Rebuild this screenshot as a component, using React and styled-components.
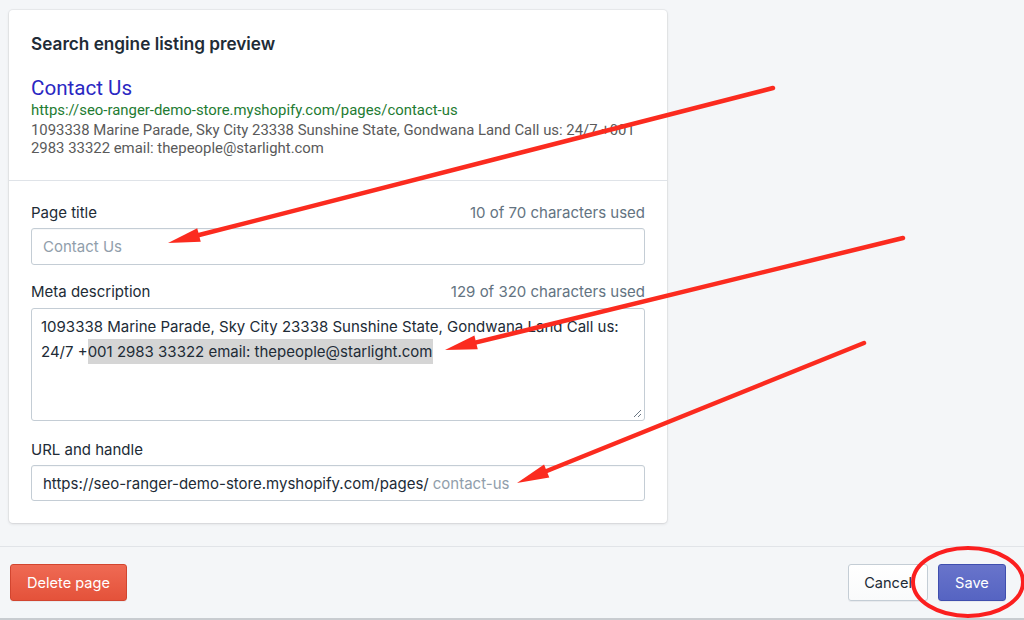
import React from 'react'
import styled, { createGlobalStyle } from 'styled-components'

const GlobalStyle = createGlobalStyle`
	html, body {
		margin: 0;
		padding: 0;
		background: #f4f6f8;
	}
	body {
		font-family: Inter, 'Noto Sans', 'Liberation Sans', sans-serif;
		color: #212b36;
	}
`

const Page = styled.div`
	position: relative;
	width: 1024px;
	height: 620px;
	overflow: hidden;
	background: #f4f6f8;
	display: flex;
	flex-direction: column;
`

const Main = styled.div`
	padding: 10px 0 0 9px;
	height: 546px;
	box-sizing: border-box;
`

const Card = styled.div`
	width: 658px;
	background: #fff;
	border-radius: 4px;
	box-shadow: 0 0 0 1px rgba(63, 63, 68, 0.05), 0 1px 3px 0 rgba(63, 63, 68, 0.15);
`

const Section = styled.div`
	padding: ${(p) => p.$pad};
	border-top: ${(p) => (p.$divided ? '1px solid #dfe3e8' : 'none')};
`

const Heading = styled.h2`
	margin: 0 0 22px;
	font-size: 17.2px;
	line-height: 20px;
	font-weight: 600;
	color: #212b36;
`

const PreviewTitle = styled.div`
	font-size: 20.6px;
	line-height: 24px;
	color: #2a27c2;
	font-family: Roboto, 'Liberation Sans', sans-serif;
`

const PreviewUrl = styled.div`
	font-size: 14.9px;
	line-height: 20px;
	color: #1e7b32;
	font-family: Roboto, 'Liberation Sans', sans-serif;
`

const PreviewText = styled.div`
	margin-top: 1px;
	font-size: 14.9px;
	line-height: 18px;
	color: #5a5a5a;
	font-family: Roboto, 'Liberation Sans', sans-serif;
`

const Field = styled.div`
	margin-top: ${(p) => p.$top || 0}px;
`

const LabelRow = styled.div`
	display: flex;
	justify-content: space-between;
	align-items: center;
	font-size: 15px;
	line-height: 20px;
	margin-bottom: ${(p) => p.$gap || 5}px;
`

const Label = styled.span`
	color: #212b36;
`

const Counter = styled.span`
	color: #637381;
`

const Input = styled.div`
	box-sizing: border-box;
	height: ${(p) => p.$h || 37}px;
	border: 1px solid #c4cdd5;
	border-radius: 3px;
	box-shadow: inset 0 1px 0 0 rgba(99, 115, 129, 0.05);
	padding: 0 11px;
	display: flex;
	align-items: center;
	font-size: 15px;
	color: #212b36;
	background: #fff;
`

const Placeholder = styled.span`
	color: #919eab;
	margin-left: ${(p) => p.$ml || 0}px;
`

const TextArea = styled.div`
	position: relative;
	box-sizing: border-box;
	height: 113px;
	border: 1px solid #c4cdd5;
	border-radius: 3px;
	padding: 5px 9px;
	font-size: 15px;
	line-height: 25px;
	color: #212b36;
`

const Highlight = styled.span`
	background: #d5d5d5;
	padding: 3px 0;
`

const Grip = styled.svg`
	position: absolute;
	right: 2px;
	bottom: 2px;
`

const Footer = styled.div`
	flex: 1;
	border-top: 1px solid #e1e4e8;
	border-bottom: 2px solid #c8ccd0;
	display: flex;
	align-items: center;
	justify-content: space-between;
	padding: 0 18px 0 10px;
`

const Button = styled.button`
	height: 37px;
	padding: 0 15px;
	border-radius: 3px;
	font-family: inherit;
	font-size: 14.6px;
	cursor: pointer;
	border: 1px solid ${(p) => p.$border};
	background: ${(p) => p.$bg};
	color: ${(p) => p.$color};
	box-shadow: 0 1px 0 0 rgba(22, 29, 37, 0.05);
	min-width: ${(p) => p.$min || 0}px;
`

const ButtonGroup = styled.div`
	display: flex;
	gap: 10px;
`

const Overlay = styled.svg`
	position: absolute;
	left: 0;
	top: 0;
	pointer-events: none;
`

const arrow = (x1, y1, x2, y2) => {
	const dx = x2 - x1
	const dy = y2 - y1
	const len = Math.hypot(dx, dy)
	const ux = dx / len
	const uy = dy / len
	const bx = x2 - ux * 32
	const by = y2 - uy * 32
	const px = -uy * 7
	const py = ux * 7
	return (
		<g key={`${x1}-${y1}`}>
			<line x1={x1} y1={y1} x2={bx + ux * 4} y2={by + uy * 4} stroke='#fb2b1f' strokeWidth='4.5' strokeLinecap='round' />
			<polygon points={`${x2},${y2} ${bx + px},${by + py} ${bx - px},${by - py}`} fill='#fb2b1f' />
		</g>
	)
}

const App = () => {
	return (
		<Page>
			<GlobalStyle />
			<Main>
				<Card>
					<Section $pad='24px 22px 23px'>
						<Heading>Search engine listing preview</Heading>
						<PreviewTitle>Contact Us</PreviewTitle>
						<PreviewUrl>https://seo-ranger-demo-store.myshopify.com/pages/contact-us</PreviewUrl>
						<PreviewText>
							1093338 Marine Parade, Sky City 23338 Sunshine State, Gondwana Land Call us: 24/7 +001
							2983 33322 email: thepeople@starlight.com
						</PreviewText>
					</Section>
					<Section $divided $pad='22px 22px 22px'>
						<Field>
							<LabelRow>
								<Label>Page title</Label>
								<Counter>10 of 70 characters used</Counter>
							</LabelRow>
							<Input>
								<Placeholder>Contact Us</Placeholder>
							</Input>
						</Field>
						<Field $top={17}>
							<LabelRow $gap={6}>
								<Label>Meta description</Label>
								<Counter>129 of 320 characters used</Counter>
							</LabelRow>
							<TextArea>
								1093338 Marine Parade, Sky City 23338 Sunshine State, Gondwana Land Call us: 24/7 +
								<Highlight>001 2983 33322 email: thepeople@starlight.com </Highlight>
								<Grip width='10' height='10' viewBox='0 0 10 10'>
									<path d='M9 2 L2 9 M9 6 L6 9' stroke='#6b7784' strokeWidth='1' />
								</Grip>
							</TextArea>
						</Field>
						<Field $top={19}>
							<LabelRow $gap={5}>
								<Label>URL and handle</Label>
							</LabelRow>
							<Input $h={36}>
								https://seo-ranger-demo-store.myshopify.com/pages/
								<Placeholder $ml={4}>contact-us</Placeholder>
							</Input>
						</Field>
					</Section>
				</Card>
			</Main>
			<Footer>
				<Button $bg='linear-gradient(#ef6a54, #e4523a)' $border='#d2452f' $color='#fff' $min={117}>
					Delete page
				</Button>
				<ButtonGroup>
					<Button $bg='linear-gradient(#fff, #f9fafb)' $border='#c4cdd5' $color='#212b36'>
						Cancel
					</Button>
					<Button $bg='linear-gradient(#6874cb, #5664c2)' $border='#3f4eae' $color='#fff' $min={68}>
						Save
					</Button>
				</ButtonGroup>
			</Footer>
			<Overlay width='1024' height='620' viewBox='0 0 1024 620'>
				{arrow(773, 88, 168, 243)}
				{arrow(903, 238, 445, 350)}
				{arrow(864, 343, 517, 483)}
				<ellipse cx='968' cy='582' rx='55' ry='34' fill='none' stroke='#fb1f1f' strokeWidth='4' />
			</Overlay>
		</Page>
	)
}

export default App
